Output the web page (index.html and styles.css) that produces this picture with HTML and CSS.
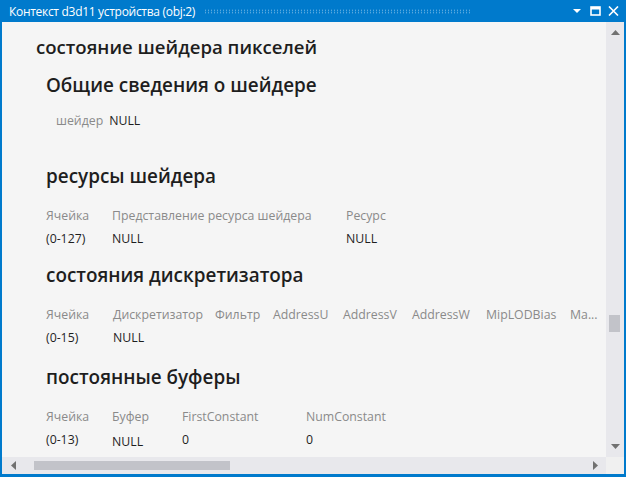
FILE: index.html
```html
<!DOCTYPE html>
<html lang="ru">
<head>
<meta charset="utf-8">
<title>Контекст d3d11 устройства</title>
<link rel="stylesheet" href="styles.css">
</head>
<body>
<div class="window">
  <div class="titlebar">
    <span class="title">Контекст d3d11 устройства (obj:2)</span>
    <span class="grip"></span>
    <span class="tbtns">
      <svg class="tb-drop" width="10" height="6" viewBox="0 0 10 6"><path d="M1 1h8L5 5z" fill="#fff"/></svg>
      <svg class="tb-max" width="11" height="10" viewBox="0 0 11 10"><rect x="1" y="1" width="9" height="8" fill="none" stroke="#fff" stroke-width="1.6"/><rect x="1" y="1" width="9" height="2.5" fill="#fff"/></svg>
      <svg class="tb-close" width="11" height="10" viewBox="0 0 11 10"><path d="M1 0.5l9 9M10 0.5l-9 9" stroke="#fff" stroke-width="1.6"/></svg>
    </span>
  </div>
  <div class="body">
    <div class="viewport">
      <div class="content">
        <h1 class="h1">состояние шейдера пикселей</h1>
        <section class="sec">
          <h2 class="h2">Общие сведения о шейдере</h2>
          <div class="prop"><span class="lbl">шейдер</span><span class="val">NULL</span></div>
        </section>
        <section class="sec sec-gap">
          <h2 class="h2">ресурсы шейдера</h2>
          <div class="tbl t1">
            <span class="th">Ячейка</span><span class="th">Представление ресурса шейдера</span><span class="th">Ресурс</span>
            <span class="td">(0-127)</span><span class="td">NULL</span><span class="td">NULL</span>
          </div>
        </section>
        <section class="sec">
          <h2 class="h2">состояния дискретизатора</h2>
          <div class="tbl t2">
            <span class="th">Ячейка</span><span class="th">Дискретизатор</span><span class="th">Фильтр</span><span class="th">AddressU</span><span class="th">AddressV</span><span class="th">AddressW</span><span class="th">MipLODBias</span><span class="th">Ma...</span>
            <span class="td">(0-15)</span><span class="td">NULL</span><span class="td"></span><span class="td"></span><span class="td"></span><span class="td"></span><span class="td"></span><span class="td"></span>
          </div>
        </section>
        <section class="sec sec-last">
          <h2 class="h2">постоянные буферы</h2>
          <div class="tbl t3">
            <span class="th">Ячейка</span><span class="th">Буфер</span><span class="th">FirstConstant</span><span class="th">NumConstant</span>
            <span class="td">(0-13)</span><span class="td low">NULL</span><span class="td">0</span><span class="td">0</span>
          </div>
        </section>
      </div>
    </div>
    <div class="vscroll">
      <svg class="arr" width="9" height="5" viewBox="0 0 9 5"><path d="M0 5L4.5 0L9 5z" fill="#717171"/></svg>
      <div class="vtrack"><div class="vthumb"></div></div>
      <svg class="arr" width="9" height="5" viewBox="0 0 9 5"><path d="M0 0h9L4.5 5z" fill="#717171"/></svg>
    </div>
    <div class="hscroll">
      <svg class="arr" width="5" height="9" viewBox="0 0 5 9"><path d="M5 0v9L0 4.5z" fill="#717171"/></svg>
      <div class="htrack"><div class="hthumb"></div></div>
      <svg class="arr" width="5" height="9" viewBox="0 0 5 9"><path d="M0 0v9L5 4.5z" fill="#717171"/></svg>
    </div>
    <div class="corner"></div>
  </div>
</div>
</body>
</html>
```

FILE: styles.css
```css
* { box-sizing: border-box; }
html, body { margin: 0; padding: 0; }
body {
  width: 626px;
  height: 477px;
  overflow: hidden;
  font-family: "Open Sans", "Noto Sans", sans-serif;
  background: #fff;
}
.window {
  width: 626px;
  height: 477px;
  background: #007acc;
  padding: 0 2px 3px 2px;
  display: flex;
  flex-direction: column;
}
.titlebar {
  height: 22px;
  flex: none;
  display: flex;
  align-items: center;
  color: #fff;
  padding-left: 7px;
}
.title {
  font-size: 12px;
  letter-spacing: -0.3px;
  white-space: nowrap;
}
.grip {
  flex: 1;
  height: 5px;
  margin: 1px 102px 0 9px;
  background-image: radial-gradient(circle, rgba(255,255,255,0.45) 0.6px, transparent 0.9px);
  background-size: 3px 2.5px;
}
.tbtns {
  display: flex;
  align-items: center;
  gap: 7px;
  padding-right: 5px;
}
.tb-drop { margin-right: 1px; }
.body {
  flex: 1;
  display: grid;
  grid-template-columns: 1fr 18px;
  grid-template-rows: 1fr 17px;
  background: #f5f5f5;
  min-height: 0;
}
.viewport {
  overflow: hidden;
  min-width: 0;
  min-height: 0;
}
.content {
  padding: 11px 0 0 34px;
  color: #1e1e1e;
  width: 700px;
}
.h1 {
  margin: 0;
  font-size: 18.6px;
  font-weight: 600;
  line-height: 28px;
}
.sec { padding-left: 10px; margin-top: 11px; }
.sec:first-of-type { margin-top: 10px; }
.sec-gap { margin-top: 31px; }
.sec-last { margin-top: 14px; }
.h2 {
  margin: 0;
  font-size: 18.9px;
  font-weight: 600;
  line-height: 28px;
}
.prop {
  margin-top: 12px;
  padding-left: 10px;
  display: flex;
  gap: 6px;
  font-size: 12.3px;
  line-height: 20px;
}
.lbl { color: #8a8a8a; }
.val { color: #1e1e1e; }
.tbl {
  display: grid;
  margin-top: 14px;
  font-size: 12.3px;
  line-height: 23px;
  white-space: nowrap;
}
.th { color: #8a8a8a; }
.td { color: #1e1e1e; }
.low { position: relative; top: 2px; }
.t1 { grid-template-columns: 66px 234px 100px; }
.t2 { grid-template-columns: 67px 102px 58px 70px 69px 74px 84px 60px; }
.t3 { grid-template-columns: 66px 70px 124px 100px; }
.vscroll {
  background: #e8e8ec;
  display: flex;
  flex-direction: column;
  align-items: center;
  padding: 8px 0 8px;
}
.vtrack { flex: 1; width: 100%; position: relative; }
.vthumb {
  position: absolute;
  left: 3px;
  right: 4px;
  top: 280px;
  height: 17px;
  background: #c2c3c9;
}
.hscroll {
  background: #e8e8ec;
  display: flex;
  align-items: center;
  padding: 0 8px 0 9px;
}
.htrack { flex: 1; height: 100%; position: relative; }
.hthumb {
  position: absolute;
  top: 4px;
  bottom: 4px;
  left: 18px;
  width: 196px;
  background: #c2c3c9;
}
.corner { background: #f0f0f0; }
```
